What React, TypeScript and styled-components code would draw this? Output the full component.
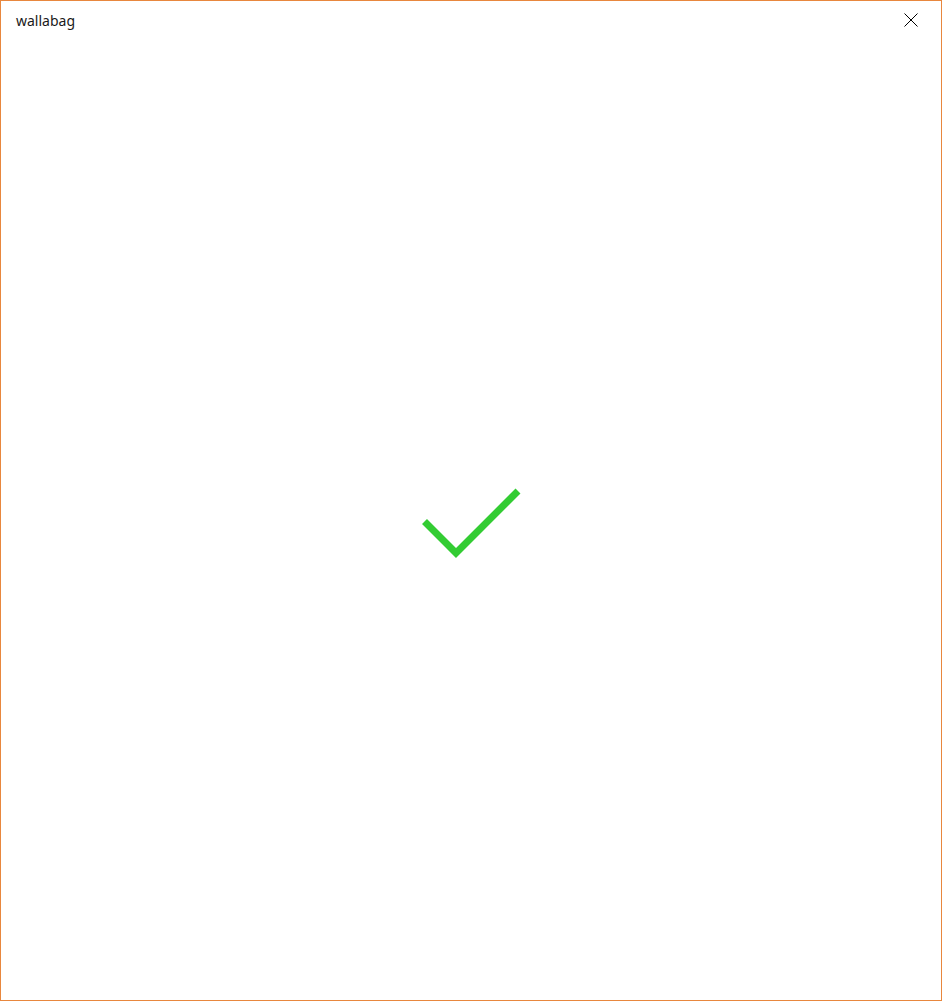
import React, {FC} from 'react';

import styled, {createGlobalStyle} from 'styled-components';

const GlobalStyle = createGlobalStyle`
    html, body {
        margin: 0;
        padding: 0;
        background: #ffffff;
    }

    #root {
        height: 100vh;
    }
`;

const Window = styled.div`
    box-sizing: border-box;
    display: flex;
    flex-direction: column;
    width: 942px;
    height: 1001px;
    border: 1px solid #e8873e;
    background: #ffffff;
    font-family: "Noto Sans", "Open Sans", sans-serif;
`;

const TitleBar = styled.div`
    display: flex;
    align-items: center;
    justify-content: space-between;
    height: 39px;
    padding: 0 0 0 15px;
`;

const Title = styled.span`
    font-size: 14px;
    color: #1a1a1a;
`;

const CloseButton = styled.button`
    display: flex;
    align-items: center;
    justify-content: center;
    width: 46px;
    height: 39px;
    margin-right: 7px;
    margin-top: -1px;
    padding: 0;
    border: none;
    background: transparent;
    cursor: pointer;
`;

const Content = styled.div`
    flex: 1;
    display: flex;
    align-items: center;
    justify-content: center;
    padding-top: 5px;
`;

const CloseIcon: FC = () => (
    <svg width={14} height={14} viewBox={'0 0 14 14'}>
        <path
            d={'M0.5 0.5 L13.5 13.5 M13.5 0.5 L0.5 13.5'}
            stroke={'#000000'}
            strokeWidth={1}
            fill={'none'}
        />
    </svg>
);

const CheckIcon: FC = () => (
    <svg width={100} height={72} viewBox={'0 0 100 72'}>
        <polyline
            points={'3.5,34.5 35,66 97,4'}
            stroke={'#33cc33'}
            strokeWidth={7}
            strokeLinecap={'butt'}
            strokeLinejoin={'miter'}
            fill={'none'}
        />
    </svg>
);

const App: FC = () => (
    <>
        <GlobalStyle/>
        <Window>
            <TitleBar>
                <Title>{'wallabag'}</Title>
                <CloseButton aria-label={'Close'}>
                    <CloseIcon/>
                </CloseButton>
            </TitleBar>
            <Content>
                <CheckIcon/>
            </Content>
        </Window>
    </>
);

export default App;
